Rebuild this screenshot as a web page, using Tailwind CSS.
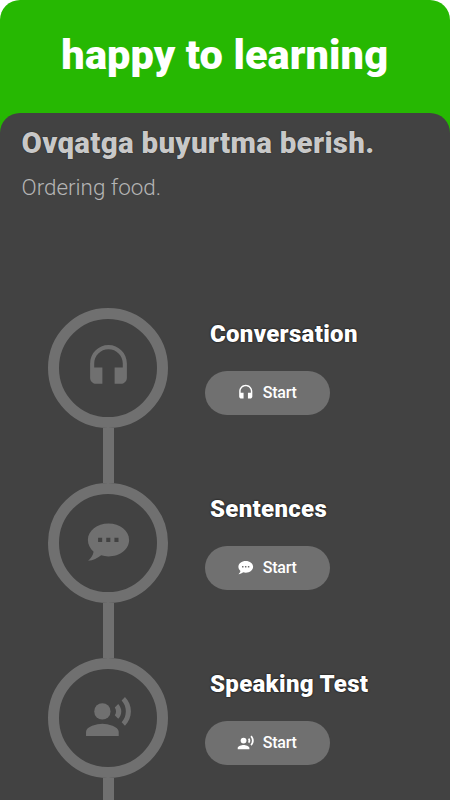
<!DOCTYPE html>
<html lang="uz">
<head>
    <meta charset="UTF-8">
    <meta name="viewport" content="width=device-width, initial-scale=1.0">
    <title>happy to learning</title>
    <script src="https://cdn.jsdelivr.net/npm/@tailwindcss/browser@4"></script>
</head>
<body class="bg-white font-['Roboto',sans-serif]">

    <!-- Shared icons -->
    <svg class="hidden">
        <symbol id="headphones" viewBox="0 0 24 24">
            <path d="M12 1c-4.97 0-9 4.03-9 9v7c0 1.66 1.34 3 3 3h3v-8H5v-2c0-3.87 3.13-7 7-7s7 3.13 7 7v2h-4v8h3c1.66 0 3-1.34 3-3v-7c0-4.97-4.03-9-9-9z"/>
        </symbol>
        <symbol id="chat" viewBox="0 0 24 24">
            <path fill-rule="evenodd" d="M12 2.7c5.55 0 10.1 3.5 10.1 8.05s-4.55 8.05-10.1 8.05c-1.3 0-2.5-.15-3.6-.5C6.6 19.8 4.5 20.9 2 20.9c1.3-1.1 2.4-2.6 2.7-4.4C3 14.9 1.9 12.9 1.9 10.75 1.9 6.2 6.45 2.7 12 2.7zM6.9 9.7v2h2v-2zM10.9 9.7v2h2v-2zM14.9 9.7v2h2v-2z"/>
        </symbol>
        <symbol id="voice" viewBox="0 0 24 24">
            <circle cx="9" cy="9" r="4"/>
            <path d="M9 15c-2.67 0-8 1.34-8 4v2h16v-2c0-2.66-5.33-4-8-4zm7.76-9.64l-1.68 1.69c.84 1.18.84 2.71 0 3.89l1.68 1.69c2.02-2.02 2.02-5.07 0-7.27zM20.07 2l-1.63 1.63c2.77 3.02 2.77 7.56 0 10.74L20.07 16c3.9-3.89 3.91-9.95 0-14z"/>
        </symbol>
    </svg>

    <div class="w-[449.5px] h-[800px] overflow-hidden rounded-t-[20px] bg-[#26b802]">
        <header class="h-[112.5px] flex items-center justify-center">
            <h1 class="text-[41.5px] leading-[48px] -mt-[3px] tracking-[0.1px] font-black text-white whitespace-nowrap">happy to learning</h1>
        </header>

        <main class="h-[687.5px] overflow-hidden rounded-t-[20px] bg-[#424242]">
            <div class="h-[195px] pl-[21.5px] pt-3">
                <h2 class="text-[29.5px] leading-9 tracking-[0.28px] font-black text-[#c8c8c8] whitespace-nowrap text-shadow-[0_0_1px_#000]">Ovqatga buyurtma berish.</h2>
                <p class="mt-3 text-[22.4px] leading-7 font-light text-[#b5b5b5]">Ordering food.</p>
            </div>

            <!-- Lesson steps -->
            <section class="flex h-[175px] pl-12">
                <div class="w-[120px] flex flex-col items-center shrink-0">
                    <div class="size-[120px] shrink-0 rounded-full border-[11px] border-[#707070] flex items-center justify-center">
                        <svg class="size-[49px] fill-[#707070]"><use href="#headphones"/></svg>
                    </div>
                    <div class="w-[11px] grow bg-[#707070]"></div>
                </div>
                <div class="pl-[36.5px]">
                    <h3 class="mt-2.5 pl-[5.5px] text-[24px] leading-8 tracking-[0.3px] font-black text-white whitespace-nowrap text-shadow-[0_0_2px_#000]">Conversation</h3>
                    <button class="mt-[21px] w-[125px] h-11 rounded-full bg-[#707070] flex items-center justify-center gap-2 text-white">
                        <svg class="size-[17.5px] fill-white"><use href="#headphones"/></svg>
                        <span class="pt-px text-base tracking-[-0.2px] font-medium">Start</span>
                    </button>
                </div>
            </section>

            <section class="flex h-[175px] pl-12">
                <div class="w-[120px] flex flex-col items-center shrink-0">
                    <div class="size-[120px] shrink-0 rounded-full border-[11px] border-[#707070] flex items-center justify-center">
                        <svg class="size-[49px] fill-[#707070]"><use href="#chat"/></svg>
                    </div>
                    <div class="w-[11px] grow bg-[#707070]"></div>
                </div>
                <div class="pl-[36.5px]">
                    <h3 class="mt-2.5 pl-[5.5px] text-[24px] leading-8 tracking-[0.3px] font-black text-white whitespace-nowrap text-shadow-[0_0_2px_#000]">Sentences</h3>
                    <button class="mt-[21px] w-[125px] h-11 rounded-full bg-[#707070] flex items-center justify-center gap-2 text-white">
                        <svg class="size-[17.5px] fill-white"><use href="#chat"/></svg>
                        <span class="pt-px text-base tracking-[-0.2px] font-medium">Start</span>
                    </button>
                </div>
            </section>

            <section class="flex h-[175px] pl-12">
                <div class="w-[120px] flex flex-col items-center shrink-0">
                    <div class="size-[120px] shrink-0 rounded-full border-[11px] border-[#707070] flex items-center justify-center">
                        <svg class="size-[49px] fill-[#707070]"><use href="#voice"/></svg>
                    </div>
                    <div class="w-[11px] grow bg-[#707070]"></div>
                </div>
                <div class="pl-[36.5px]">
                    <h3 class="mt-2.5 pl-[5.5px] text-[24px] leading-8 tracking-[0.3px] font-black text-white whitespace-nowrap text-shadow-[0_0_2px_#000]">Speaking Test</h3>
                    <button class="mt-[21px] w-[125px] h-11 rounded-full bg-[#707070] flex items-center justify-center gap-2 text-white">
                        <svg class="size-[17.5px] fill-white"><use href="#voice"/></svg>
                        <span class="pt-px text-base tracking-[-0.2px] font-medium">Start</span>
                    </button>
                </div>
            </section>
        </main>
    </div>

</body>
</html>
